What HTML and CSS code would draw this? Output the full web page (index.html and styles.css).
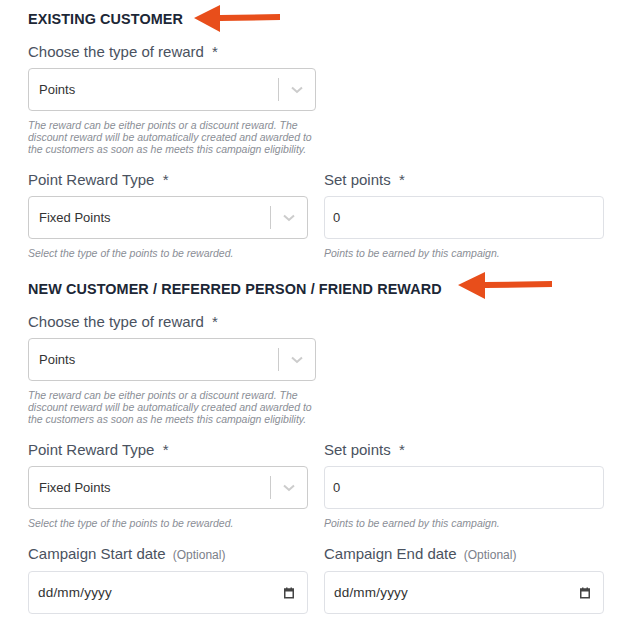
FILE: index.html
```html
<!DOCTYPE html>
<html lang="en">
<head>
<meta charset="utf-8">
<title>Campaign rewards</title>
<link rel="stylesheet" href="styles.css">
</head>
<body>
<div class="page">
  <section class="section">
    <h2 class="section-title">EXISTING CUSTOMER
      <svg class="arrow arrow-1" width="88" height="28" viewBox="0 0 88 28"><polygon points="0,13 26,0 26,10 86,9 86,15 26,16 26,27" fill="#e84e1b"/></svg>
    </h2>
    <div class="group">
      <label class="label">Choose the type of reward <span class="req">*</span></label>
      <div class="select wide">
        <span class="select-value">Points</span>
        <span class="select-ind"><span class="sep"></span><svg class="chev" width="12" height="8" viewBox="0 0 12 8"><path d="M1 1.5 L6 6 L11 1.5" fill="none" stroke="#cccccc" stroke-width="2"/></svg></span>
      </div>
      <p class="help">The reward can be either points or a discount reward. The<br>discount reward will be automatically created and awarded to<br>the customers as soon as he meets this campaign eligibility.</p>
    </div>
    <div class="row">
      <div class="group">
        <label class="label">Point Reward Type <span class="req">*</span></label>
        <div class="select">
          <span class="select-value">Fixed Points</span>
          <span class="select-ind"><span class="sep"></span><svg class="chev" width="12" height="8" viewBox="0 0 12 8"><path d="M1 1.5 L6 6 L11 1.5" fill="none" stroke="#cccccc" stroke-width="2"/></svg></span>
        </div>
        <p class="help">Select the type of the points to be rewarded.</p>
      </div>
      <div class="group">
        <label class="label">Set points <span class="req">*</span></label>
        <input class="input" type="text" value="0">
        <p class="help">Points to be earned by this campaign.</p>
      </div>
    </div>
  </section>

  <section class="section">
    <h2 class="section-title">NEW CUSTOMER / REFERRED PERSON / FRIEND REWARD
      <svg class="arrow arrow-2" width="96" height="28" viewBox="0 0 96 28"><polygon points="0,13 27,0 27,10 94,9 94,15 27,16 27,27" fill="#e84e1b"/></svg>
    </h2>
    <div class="group">
      <label class="label">Choose the type of reward <span class="req">*</span></label>
      <div class="select wide">
        <span class="select-value">Points</span>
        <span class="select-ind"><span class="sep"></span><svg class="chev" width="12" height="8" viewBox="0 0 12 8"><path d="M1 1.5 L6 6 L11 1.5" fill="none" stroke="#cccccc" stroke-width="2"/></svg></span>
      </div>
      <p class="help">The reward can be either points or a discount reward. The<br>discount reward will be automatically created and awarded to<br>the customers as soon as he meets this campaign eligibility.</p>
    </div>
    <div class="row">
      <div class="group">
        <label class="label">Point Reward Type <span class="req">*</span></label>
        <div class="select">
          <span class="select-value">Fixed Points</span>
          <span class="select-ind"><span class="sep"></span><svg class="chev" width="12" height="8" viewBox="0 0 12 8"><path d="M1 1.5 L6 6 L11 1.5" fill="none" stroke="#cccccc" stroke-width="2"/></svg></span>
        </div>
        <p class="help">Select the type of the points to be rewarded.</p>
      </div>
      <div class="group">
        <label class="label">Set points <span class="req">*</span></label>
        <input class="input" type="text" value="0">
        <p class="help">Points to be earned by this campaign.</p>
      </div>
    </div>
    <div class="row">
      <div class="group">
        <label class="label">Campaign Start date <span class="opt">(Optional)</span></label>
        <div class="input date">
          <span class="date-text">dd/mm/yyyy</span>
          <svg class="cal" width="12" height="12" viewBox="0 0 12 12"><rect x="1.75" y="2.25" width="8.5" height="8.5" fill="none" stroke="#444" stroke-width="1.5"/><rect x="1" y="1.5" width="10" height="3" fill="#444"/><rect x="3" y="0.5" width="1.5" height="2" fill="#444"/><rect x="7.5" y="0.5" width="1.5" height="2" fill="#444"/></svg>
        </div>
      </div>
      <div class="group">
        <label class="label">Campaign End date <span class="opt">(Optional)</span></label>
        <div class="input date">
          <span class="date-text">dd/mm/yyyy</span>
          <svg class="cal" width="12" height="12" viewBox="0 0 12 12"><rect x="1.75" y="2.25" width="8.5" height="8.5" fill="none" stroke="#444" stroke-width="1.5"/><rect x="1" y="1.5" width="10" height="3" fill="#444"/><rect x="3" y="0.5" width="1.5" height="2" fill="#444"/><rect x="7.5" y="0.5" width="1.5" height="2" fill="#444"/></svg>
        </div>
      </div>
    </div>
  </section>
</div>
</body>
</html>
```
FILE: styles.css
```css
html, body {
  margin: 0;
  padding: 0;
  background: #ffffff;
}
body {
  font-family: "Liberation Sans", Arial, sans-serif;
  color: #333333;
}
.page {
  padding: 9px 13px 0 28px;
}
.section-title {
  position: relative;
  margin: 0 0 13px 0;
  font-size: 14.4px;
  line-height: 20px;
  font-weight: bold;
  color: #1c2736;
  letter-spacing: 0.1px;
}
.section + .section .section-title {
  margin-top: 5px;
  margin-bottom: 13px;
}
.arrow {
  position: absolute;
  top: -4px;
}
.arrow-1 {
  left: 166px;
}
.arrow-2 {
  left: 430px;
  top: -7px;
}
.group {
  margin-bottom: 15px;
  min-width: 0;
}
.label {
  display: block;
  font-size: 15px;
  line-height: 20px;
  color: #4a5260;
  margin-bottom: 6px;
}
.req {
  margin-left: 4px;
}
.opt {
  font-size: 12px;
  color: #7b8089;
  margin-left: 3px;
}
.row {
  display: grid;
  grid-template-columns: 1fr 1fr;
  column-gap: 16px;
}
.select {
  box-sizing: border-box;
  height: 43px;
  border: 1px solid #cccccc;
  border-radius: 4px;
  display: flex;
  align-items: center;
  padding-left: 10px;
}
.select.wide {
  width: 288px;
}
.select-value {
  flex: 1;
  font-size: 13px;
  color: #333333;
}
.select-ind {
  display: flex;
  align-items: center;
  height: 100%;
}
.sep {
  width: 1px;
  height: 23px;
  background: #cccccc;
}
.chev {
  margin: 0 12px 0 12px;
}
.input {
  box-sizing: border-box;
  display: block;
  width: 100%;
  height: 43px;
  margin: 0;
  border: 1px solid #dfe1e6;
  border-radius: 4px;
  padding: 0 8px;
  font-family: "Liberation Sans", Arial, sans-serif;
  font-size: 13px;
  color: #333333;
  background: #ffffff;
  outline: none;
}
.input.date {
  display: flex;
  align-items: center;
  justify-content: space-between;
  padding: 0 12px 0 9px;
}
.date-text {
  font-size: 13.5px;
  letter-spacing: 0.2px;
  color: #333333;
}
.cal {
  display: block;
}
.help {
  margin: 8px 0 0 0;
  font-size: 10.5px;
  line-height: 12px;
  font-style: italic;
  color: #8a8e96;
}
```
